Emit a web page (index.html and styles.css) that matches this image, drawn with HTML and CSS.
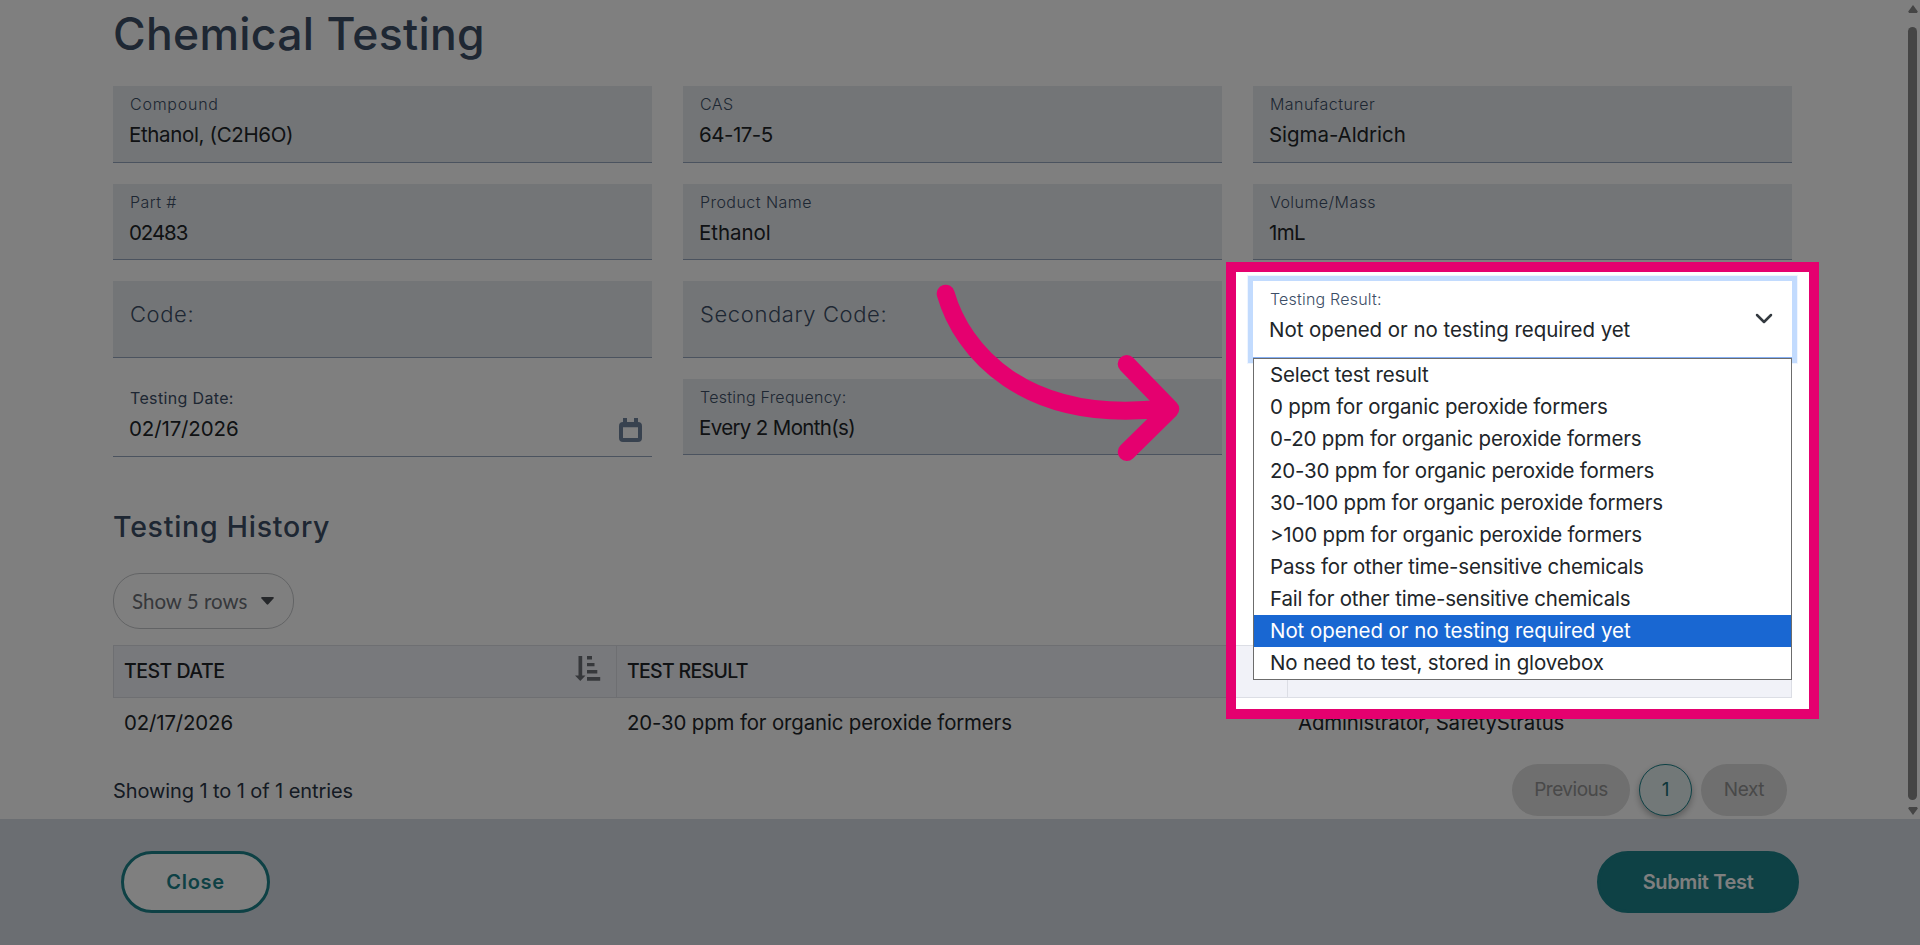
FILE: index.html
```
<!DOCTYPE html>
<html lang="en">
<head>
<meta charset="utf-8">
<title>Chemical Testing</title>
<link rel="stylesheet" href="styles.css">
</head>
<body>
<div class="page">
  <main class="content">
    <h1 class="title">Chemical Testing</h1>
    <section class="fields">
      <div class="field"><span class="label wide">Compound</span><span class="value t3">Ethanol, (C2H6O)</span></div>
      <div class="field"><span class="label">CAS</span><span class="value t5">64-17-5</span></div>
      <div class="field"><span class="label">Manufacturer</span><span class="value">Sigma-Aldrich</span></div>
      <div class="field second"><span class="label">Part #</span><span class="value t10">02483</span></div>
      <div class="field second"><span class="label">Product Name</span><span class="value">Ethanol</span></div>
      <div class="field second"><span class="label">Volume/Mass</span><span class="value t7">1mL</span></div>
      <div class="field empty"><span class="label">Code:</span></div>
      <div class="field empty"><span class="label">Secondary Code:</span></div>
      <div class="field select">
        <span class="label">Testing Result:</span>
        <span class="value">Not opened or no testing required yet</span>
        <svg class="chevron" width="18" height="12" viewBox="0 0 18 12"><path d="M2 2l7 7 7-7" fill="none" stroke="#343a40" stroke-width="2.5" stroke-linecap="round" stroke-linejoin="round"/></svg>
        <ul class="options">
          <li>Select test result</li>
          <li>0 ppm for organic peroxide formers</li>
          <li>0-20 ppm for organic peroxide formers</li>
          <li>20-30 ppm for organic peroxide formers</li>
          <li>30-100 ppm for organic peroxide formers</li>
          <li>&gt;100 ppm for organic peroxide formers</li>
          <li>Pass for other time-sensitive chemicals</li>
          <li>Fail for other time-sensitive chemicals</li>
          <li class="selected">Not opened or no testing required yet</li>
          <li class="t1">No need to test, stored in glovebox</li>
        </ul>
      </div>
      <div class="field date">
        <span class="label">Testing Date:</span><span class="value t1">02/17/2026</span>
        <svg class="calendar" width="23" height="24" viewBox="0 0 23 24"><path fill="#71859f" fill-rule="evenodd" d="M4 0h4v4h7V0h4v4a4 4 0 0 1 4 4v12a4 4 0 0 1-4 4H4a4 4 0 0 1-4-4V8a4 4 0 0 1 4-4zM4 9.300v10.700h15V9.300z"/></svg>
      </div>
      <div class="field"><span class="label tight">Testing Frequency:</span><span class="value t7">Every 2 Month(s)</span></div>
    </section>
    <h2 class="subtitle">Testing History</h2>
    <button class="rows-button">Show 5 rows
      <svg width="13" height="8" viewBox="0 0 13 8"><path fill="#4b4f54" d="M1 0h11q1.300.3.500 1.400L7.300 7.300q-.8.8-1.600 0L.5 1.400Q-.3.300 1 0z"/></svg>
    </button>
    <div class="table">
      <div class="table-head">
        <div class="cell">TEST DATE
          <svg class="sort" width="26" height="27" viewBox="0 0 26 27"><path fill="#6c7077" d="M3.500 1h3.700v19.500H10.500L5.300 26 0 20.500h3.500zM12 1h5v3.500h-5zM12 8h7.500v3.300H12zM12 15h10.300v3.400H12zM12 22h13.200v3.800H12z"/></svg>
        </div>
        <div class="cell">TEST RESULT</div>
        <div class="cell"></div>
      </div>
      <div class="table-row">
        <div class="cell t1">02/17/2026</div>
        <div class="cell t1">20-30 ppm for organic peroxide formers</div>
        <div class="cell t1">Administrator, SafetyStratus</div>
      </div>
    </div>
    <div class="table-foot">
      <span class="entries">Showing 1 to 1 of 1 entries</span>
      <nav class="pager">
        <span class="page-button previous">Previous</span>
        <span class="page-button current">1</span>
        <span class="page-button next">Next</span>
      </nav>
    </div>
    <div class="scrollbar">
      <svg width="10" height="8" viewBox="0 0 10 8"><path fill="#8a8a8a" d="M5 0l4.800 6.500L9 8H1L.2 6.500z"/></svg>
      <div class="thumb"></div>
      <svg width="10" height="8" viewBox="0 0 10 8"><path fill="#8a8a8a" d="M5 8L.2 1.500 1 0h8l.8 1.500z"/></svg>
    </div>
  </main>
  <footer class="actions">
    <button class="close">Close</button>
    <button class="submit">Submit Test</button>
  </footer>
  <div class="spotlight"></div>
  <svg class="arrow" width="250" height="190" viewBox="930 280 250 190"><path d="M945.700 293.700C961.700 350 1023.300 425 1165 408.300M1126.700 364L1170.300 409l-43.600 43" fill="none" stroke="#e5006f" stroke-width="18" stroke-linecap="round" stroke-linejoin="round"/></svg>
</div>
</body>
</html>
```
FILE: styles.css
```
* { box-sizing: border-box; }
body {
  margin: 0;
  background: #fff;
  color: #212529;
  font-family: Inter, "Liberation Sans", sans-serif;
  overflow: hidden;
}
.page {
  position: relative;
  width: 1920px;
  height: 945px;
  overflow: hidden;
  display: flex;
  flex-direction: column;
}
.content { position: relative; height: 819px; padding: 6px 128px 0 113px; }
.title {
  margin: 0 0 24px;
  font-size: 44.5px;
  line-height: 56px;
  font-weight: 500;
  letter-spacing: 0.3px;
  color: #3c4e66;
}
.fields {
  display: grid;
  grid-template-columns: repeat(3, 539px);
  grid-template-rows: 77px 76px 77px 76px;
  gap: 21px 31px;
}
.field {
  position: relative;
  display: flex;
  flex-direction: column;
  gap: 7px;
  padding: 8px 16px 0;
  background: #e7ebee;
  border-bottom: 1px solid #97a6bf;
  white-space: nowrap;
}
.label {
  padding-left: 1px;
  font-size: 16px;
  line-height: 20px;
  font-weight: 300;
  letter-spacing: 0.45px;
  color: #3c4e66;
}
.label.wide { letter-spacing: 0.75px; }
.label.tight { letter-spacing: 0.25px; }
.value { font-size: 20.5px; line-height: 28px; letter-spacing: -0.05px; }
.empty { padding-top: 19px; }
.empty .label { font-size: 22px; line-height: 28px; letter-spacing: 0.6px; }
.date { height: 78px; padding-top: 9px; background: #fff; }
.date .label { font-weight: 400; letter-spacing: 0.35px; }
.calendar { position: absolute; right: 10px; top: 39px; }
.select {
  background: #fff;
  border-color: #86b0f5;
  box-shadow: 0 0 0 5px #c2dbfe, 0 0 0 6px #eff5ff;
}
.select .label { letter-spacing: 0.2px; }
.chevron { position: absolute; right: 19px; top: 32px; }
.options {
  position: absolute;
  top: 77px;
  left: 0;
  z-index: 2;
  width: 539px;
  margin: 0;
  padding: 0;
  list-style: none;
  background: #fff;
  border: 1px solid #6c6c6c;
  font-size: 20.5px;
  line-height: 32px;
}
.options li { padding-left: 16px; letter-spacing: -0.2px; }
.options .selected { background: #1967d2; color: #fff; letter-spacing: -0.07px; }
.t1, .options .t1 { letter-spacing: -0.13px; }
.t3 { letter-spacing: -0.35px; }
.t5 { letter-spacing: -0.5px; }
.t7 { letter-spacing: -0.65px; }
.t10 { letter-spacing: -1.1px; }
.subtitle {
  margin: 54px 0 28px;
  font-size: 28.5px;
  line-height: 36px;
  font-weight: 500;
  letter-spacing: 0.75px;
  color: #3c4e66;
}
.rows-button {
  display: flex;
  align-items: center;
  gap: 14px;
  width: 181px;
  height: 56px;
  margin: 0 0 16px;
  padding: 0 0 0 18px;
  background: #fff;
  border: 1px solid #c5c7ca;
  border-radius: 27px;
  font-family: Lato, sans-serif;
  font-size: 20.5px;
  font-weight: 400;
  line-height: 28px;
  color: #6c7077;
}
.table-head, .table-row { display: grid; grid-template-columns: 504px 671px 504px; }
.table-head {
  height: 53px;
  background: #f1f2f8;
  border: 1px solid #dcdee5;
  font-size: 19.5px;
  font-weight: 500;
  grid-template-columns: 503px 671px 503px;
}
.cell { display: flex; align-items: center; padding-left: 11px; white-space: nowrap; }
.table-row .cell:nth-child(n+2) { padding-left: 10px; }
.table-head .cell {
  justify-content: space-between;
  padding: 0 15px 2px 10px;
  letter-spacing: -0.5px;
  border-right: 1px solid #dcdee5;
}
.table-head .cell:nth-child(2) { letter-spacing: -0.7px; }
.table-head .cell:last-child { border-right: 0; }
.sort { margin-top: -5px; }
.table-row { height: 50px; font-size: 20.4px; line-height: 28px; padding-bottom: 1px; }
.table-foot {
  display: flex;
  align-items: center;
  justify-content: space-between;
  height: 52px;
  margin-top: 16px;
  padding-right: 5px;
}
.entries { padding-top: 1px; font-size: 20px; line-height: 28px; letter-spacing: -0.09px; color: #2b3646; }
.pager { display: flex; gap: 9px; font-size: 19px; letter-spacing: -0.4px; }
.page-button {
  display: flex;
  align-items: center;
  justify-content: center;
  height: 52px;
  padding-bottom: 1px;
  border-radius: 26px;
  background: #dedede;
  color: #929292;
}
.previous { width: 118px; letter-spacing: -0.5px; }
.current {
  width: 53px;
  background: #e4f0f1;
  border: 1px solid #1c838b;
  color: #1c6d74;
  box-shadow: 0 3px 7px rgba(0, 0, 0, 0.3);
}
.next { width: 86px; }
.scrollbar {
  position: absolute;
  top: 5px;
  right: 3px;
  width: 9px;
  height: 810px;
  display: flex;
  flex-direction: column;
  align-items: center;
}
.thumb { width: 9px; height: 774px; margin: 14px 0 7px; border-radius: 5px; background: #8a8a8a; }
.actions {
  position: relative;
  display: flex;
  align-items: center;
  justify-content: space-between;
  height: 126px;
  padding: 0 121px;
  background: #d7dde5;
}
.close, .submit {
  height: 62px;
  padding: 0;
  border: 3px solid #1c828a;
  border-radius: 31px;
  font: 600 20px/28px Inter, sans-serif;
}
.close { width: 149px; background: #fff; color: #1c828a; letter-spacing: 0.7px; }
.submit { width: 202px; background: #1c828a; color: #fff; letter-spacing: -0.35px; }
.spotlight {
  position: absolute;
  left: 1226px;
  top: 262px;
  width: 593px;
  height: 457px;
  border: 10px solid #e5006f;
  box-shadow: 0 0 0 2000px rgba(0, 0, 0, 0.5);
  z-index: 5;
}
.arrow { position: absolute; left: 930px; top: 280px; z-index: 6; }
```
